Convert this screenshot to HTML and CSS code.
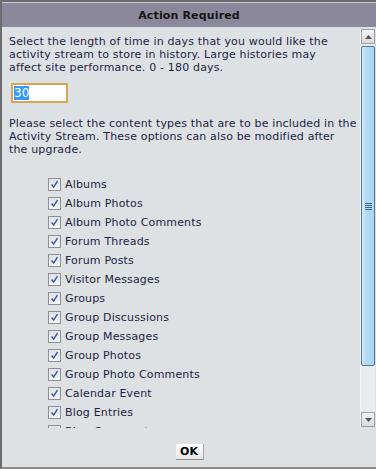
FILE: index.html
```html
<!DOCTYPE html>
<html>
<head>
<meta charset="utf-8">
<link rel="stylesheet" href="styles.css">
</head>
<body>
<div class="dialog">
  <div class="header">Action Required</div>
  <div class="main">
    <div class="content">
      <p class="para">Select the length of time in days that you would like the<br>activity stream to store in history. Large histories may<br>affect site performance. 0 - 180 days.</p>
      <div class="input"><span class="sel">30</span></div>
      <p class="para para2">Please select the content types that are to be included in the<br>Activity Stream. These options can also be modified after<br>the upgrade.</p>
      <ul class="list">
        <li><span class="cb"><svg viewBox="0 0 13 13" width="13" height="13"><path d="M3 6.5 L5.5 9.5 L10 2.5" fill="none" stroke="#3c5aa8" stroke-width="1.8"/></svg></span>Albums</li>
        <li><span class="cb"><svg viewBox="0 0 13 13" width="13" height="13"><path d="M3 6.5 L5.5 9.5 L10 2.5" fill="none" stroke="#3c5aa8" stroke-width="1.8"/></svg></span>Album Photos</li>
        <li><span class="cb"><svg viewBox="0 0 13 13" width="13" height="13"><path d="M3 6.5 L5.5 9.5 L10 2.5" fill="none" stroke="#3c5aa8" stroke-width="1.8"/></svg></span>Album Photo Comments</li>
        <li><span class="cb"><svg viewBox="0 0 13 13" width="13" height="13"><path d="M3 6.5 L5.5 9.5 L10 2.5" fill="none" stroke="#3c5aa8" stroke-width="1.8"/></svg></span>Forum Threads</li>
        <li><span class="cb"><svg viewBox="0 0 13 13" width="13" height="13"><path d="M3 6.5 L5.5 9.5 L10 2.5" fill="none" stroke="#3c5aa8" stroke-width="1.8"/></svg></span>Forum Posts</li>
        <li><span class="cb"><svg viewBox="0 0 13 13" width="13" height="13"><path d="M3 6.5 L5.5 9.5 L10 2.5" fill="none" stroke="#3c5aa8" stroke-width="1.8"/></svg></span>Visitor Messages</li>
        <li><span class="cb"><svg viewBox="0 0 13 13" width="13" height="13"><path d="M3 6.5 L5.5 9.5 L10 2.5" fill="none" stroke="#3c5aa8" stroke-width="1.8"/></svg></span>Groups</li>
        <li><span class="cb"><svg viewBox="0 0 13 13" width="13" height="13"><path d="M3 6.5 L5.5 9.5 L10 2.5" fill="none" stroke="#3c5aa8" stroke-width="1.8"/></svg></span>Group Discussions</li>
        <li><span class="cb"><svg viewBox="0 0 13 13" width="13" height="13"><path d="M3 6.5 L5.5 9.5 L10 2.5" fill="none" stroke="#3c5aa8" stroke-width="1.8"/></svg></span>Group Messages</li>
        <li><span class="cb"><svg viewBox="0 0 13 13" width="13" height="13"><path d="M3 6.5 L5.5 9.5 L10 2.5" fill="none" stroke="#3c5aa8" stroke-width="1.8"/></svg></span>Group Photos</li>
        <li><span class="cb"><svg viewBox="0 0 13 13" width="13" height="13"><path d="M3 6.5 L5.5 9.5 L10 2.5" fill="none" stroke="#3c5aa8" stroke-width="1.8"/></svg></span>Group Photo Comments</li>
        <li><span class="cb"><svg viewBox="0 0 13 13" width="13" height="13"><path d="M3 6.5 L5.5 9.5 L10 2.5" fill="none" stroke="#3c5aa8" stroke-width="1.8"/></svg></span>Calendar Event</li>
        <li><span class="cb"><svg viewBox="0 0 13 13" width="13" height="13"><path d="M3 6.5 L5.5 9.5 L10 2.5" fill="none" stroke="#3c5aa8" stroke-width="1.8"/></svg></span>Blog Entries</li>
        <li><span class="cb"><svg viewBox="0 0 13 13" width="13" height="13"><path d="M3 6.5 L5.5 9.5 L10 2.5" fill="none" stroke="#3c5aa8" stroke-width="1.8"/></svg></span>Blog Comments</li>
      </ul>
    </div>
    <div class="scrollbar">
      <div class="sbtn up"><svg viewBox="0 0 7 4" width="7" height="4"><path d="M0 4 L3.5 0 L7 4 Z" fill="#555"/></svg></div>
      <div class="thumb"><span class="grip"></span></div>
      <div class="track"></div>
      <div class="sbtn down"><svg viewBox="0 0 7 4" width="7" height="4"><path d="M0 0 L3.5 4 L7 0 Z" fill="#555"/></svg></div>
    </div>
  </div>
  <div class="footer"><button class="ok">OK</button></div>
</div>
</body>
</html>
```

FILE: styles.css
```css
html, body {
  margin: 0;
  padding: 0;
  height: 100%;
  background: #dde1e4;
}
body {
  font-family: "DejaVu Sans", Verdana, sans-serif;
  font-size: 11px;
  color: #1d2443;
}
.dialog {
  height: 469px;
  box-sizing: border-box;
  border-top: 2px solid #6c6c6c;
  border-left: 2px solid #6c6c6c;
  border-bottom: 2px solid #8a8a8a;
  display: flex;
  flex-direction: column;
}
.header {
  height: 24px;
  border-top: 1px solid #c9c7cf;
  background: #8c889b;
  color: #141414;
  font-weight: bold;
  font-size: 11px;
  letter-spacing: 0.15px;
  display: flex;
  align-items: center;
  justify-content: center;
  flex: none;
}
.main {
  height: 401px;
  display: flex;
  flex: none;
}
.content {
  flex: 1;
  overflow: hidden;
  padding: 8px 0 0 7px;
  letter-spacing: 0.17px;
}
.para {
  margin: 0;
  line-height: 13px;
  white-space: nowrap;
}
.para2 {
  margin-top: 14px;
}
.input {
  margin-top: 9px;
  margin-left: 2px;
  width: 52px;
  height: 16px;
  border: 2px solid #d8a650;
  background: #fff;
  display: flex;
  align-items: center;
  padding-left: 1px;
}
.sel {
  background: #3399ff;
  color: #fff;
  line-height: 14px;
  font-size: 12px;
  letter-spacing: 0;
}
.list {
  list-style: none;
  margin: 19px 0 0 0;
  padding: 0 0 0 39px;
}
.list li {
  height: 19px;
  display: flex;
  align-items: center;
  gap: 4px;
}
.cb {
  width: 11px;
  height: 11px;
  border: 1px solid #8d9196;
  background: linear-gradient(#dfe2e6, #f4f5f6);
  display: flex;
  align-items: center;
  justify-content: center;
  flex: none;
}
.cb svg {
  width: 11px;
  height: 11px;
}
.scrollbar {
  width: 15px;
  margin: 2px 1px 1px 0;
  display: flex;
  flex-direction: column;
  background: #e9ebed;
  border-left: 1px solid #f4f5f6;
  box-sizing: border-box;
}
.sbtn {
  height: 15px;
  flex: none;
  box-sizing: border-box;
  border: 1px solid #9da1a6;
  background: linear-gradient(#f5f5f5, #d8d9db);
  display: flex;
  align-items: center;
  justify-content: center;
}
.thumb {
  margin-top: 2px;
  height: 320px;
  flex: none;
  box-sizing: border-box;
  border: 1px solid #4f7598;
  border-radius: 2px;
  background: linear-gradient(90deg, #d8ecf8 0, #b2dbf2 35%, #a9d6f1 100%);
  display: flex;
  align-items: center;
  justify-content: center;
}
.grip {
  width: 7px;
  height: 7px;
  background: repeating-linear-gradient(#3f6487 0 1px, transparent 1px 2px);
}
.track {
  flex: 1;
}
.footer {
  flex: 1;
  display: flex;
  justify-content: center;
  align-items: flex-start;
  padding-top: 16px;
}
.ok {
  font-family: "DejaVu Sans", Verdana, sans-serif;
  font-weight: bold;
  font-size: 11px;
  line-height: 15px;
  color: #000;
  width: 28px;
  height: 16px;
  padding: 0;
  border: none;
  border-bottom: 1px solid #8e8e8e;
  border-right: 1px solid #a8a8a8;
  background: linear-gradient(#ffffff, #e6e6e6);
  margin-left: 1px;
}
```
